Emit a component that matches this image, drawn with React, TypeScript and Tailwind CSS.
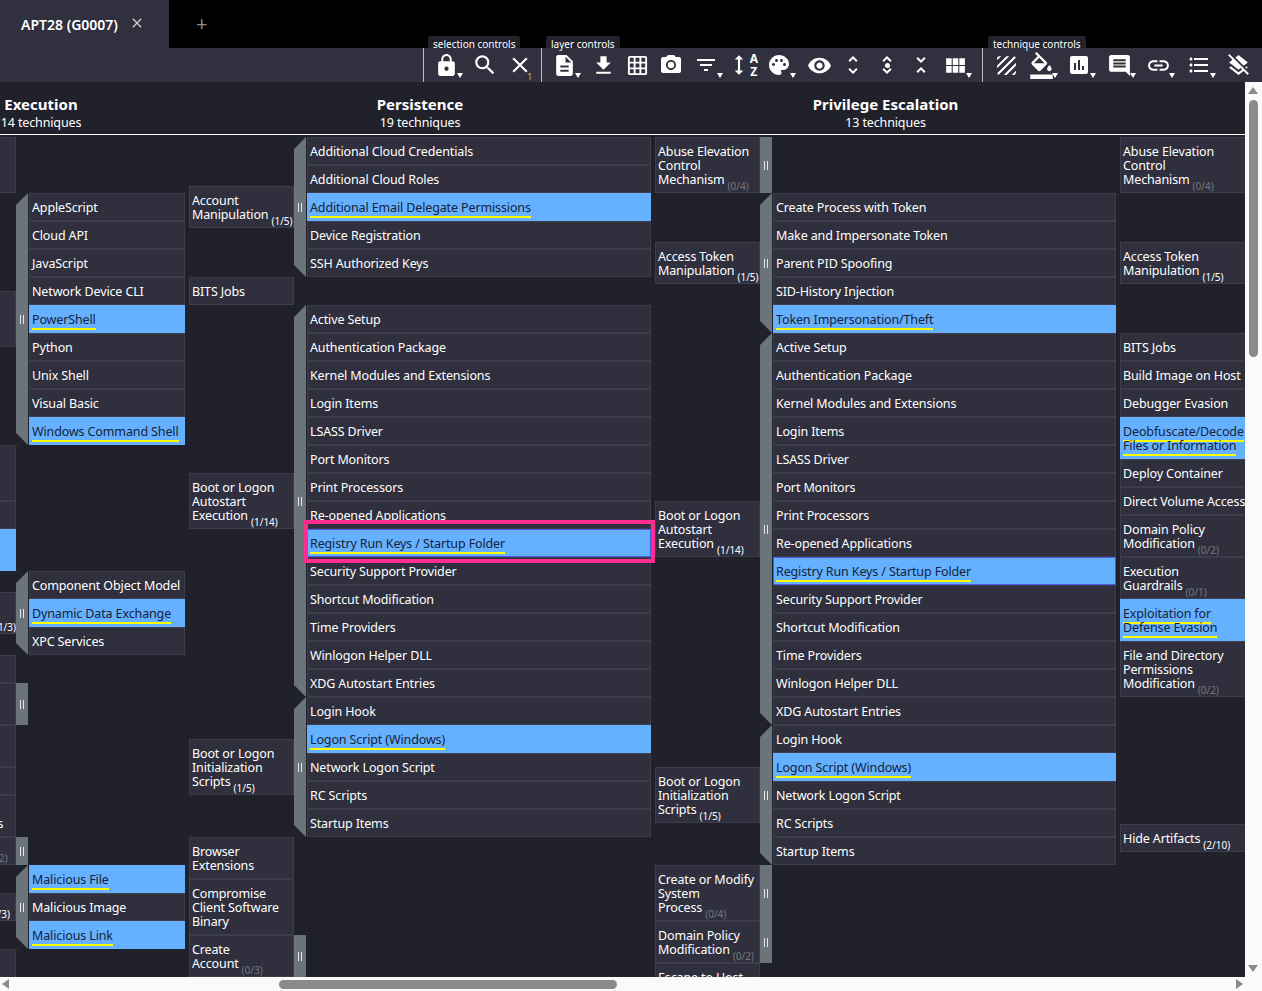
import type { ReactNode } from 'react';
import {
  MdLock, MdSearch, MdClear, MdDescription, MdFileDownload, MdGridOn, MdPhotoCamera, MdFilterList,
  MdHeight, MdPalette, MdVisibility, MdUnfoldMore, MdUnfoldLess, MdViewModule, MdTexture,
  MdFormatColorFill, MdInsertChart, MdComment, MdLink, MdFormatListBulleted, MdLayersClear,
} from 'react-icons/md';

const FONT = "font-['Noto_Sans','Open_Sans',sans-serif]";

// label, selected, outlined
type Sub = [string, boolean?, boolean?];

function Label({ text, selected }: { text: string; selected?: boolean }) {
  if (selected) return <span className="border-b-2 border-[#ffff00] text-[#14233a]">{text}</span>;
  return <span>{text}</span>;
}

function Count({ value }: { value?: string }) {
  if (!value) return null;
  const zero = value.startsWith('(0');
  return (
    <span className={`ml-[3px] whitespace-nowrap text-[10px] leading-[0] tracking-normal align-[-6px] ${zero ? 'text-[#77777f]' : 'text-white'}`}>{value}</span>
  );
}

function Cell({ text, count, selected, outlined, className = '' }: { text: string; count?: string; selected?: boolean; outlined?: boolean; className?: string }) {
  const tone = outlined
    ? 'border-[#4a55e6] bg-[#66b1ff]'
    : selected
      ? 'border-[#66b1ff] bg-[#66b1ff]'
      : 'border-[#3d3d4c] bg-[#2f2f3d] text-white';
  return (
    <div className={`border px-[2px] pb-[5px] pt-[7px] text-[12.5px] leading-[14px] tracking-[-0.13px] ${tone} ${className}`}>
      <Label text={text} selected={selected} />
      <Count value={count} />
    </div>
  );
}

function Grip({ chevron }: { chevron?: boolean }) {
  return (
    <div className={`flex w-[12px] shrink-0 items-center justify-center bg-[#6b737b] ${chevron ? '[clip-path:polygon(0_12px,100%_0,100%_100%,0_calc(100%-12px))]' : ''}`}>
      <div className="h-[9px] w-[4px] border-x border-[#e4e6e8]" />
    </div>
  );
}

// technique row: parent cell, optional sidebar, optional list of subtechniques
function Row({ text, count, selected, parentW, subW, subs, grip, cellClass }: {
  text: string; count?: string; selected?: boolean; parentW: string; subW?: string; subs?: Sub[]; grip?: boolean; cellClass?: string;
}) {
  return (
    <div className="flex">
      <div className={`flex shrink-0 flex-col justify-center ${parentW}`}>
        <Cell text={text} count={count} selected={selected} className={cellClass} />
      </div>
      {subs ? <Grip chevron /> : grip ? <Grip /> : null}
      {subs ? (
        <div className={`ml-px flex shrink-0 flex-col ${subW}`}>
          {subs.map(([s, sel, outlined]) => (
            <Cell key={s} text={s} selected={sel} outlined={outlined} className="h-[28px] whitespace-nowrap" />
          ))}
        </div>
      ) : null}
    </div>
  );
}

const bootSubs: Sub[] = [
  ['Active Setup'], ['Authentication Package'], ['Kernel Modules and Extensions'], ['Login Items'],
  ['LSASS Driver'], ['Port Monitors'], ['Print Processors'], ['Re-opened Applications'],
  ['Registry Run Keys / Startup Folder', true, true], ['Security Support Provider'], ['Shortcut Modification'],
  ['Time Providers'], ['Winlogon Helper DLL'], ['XDG Autostart Entries'],
];
const initSubs: Sub[] = [
  ['Login Hook'], ['Logon Script (Windows)', true], ['Network Logon Script'], ['RC Scripts'], ['Startup Items'],
];

function ExecutionColumn() {
  const p = 'w-[119px]';
  const s = 'w-[156px]';
  return (
    <div className="flex w-[288px] shrink-0 flex-col">
      <Row parentW={p} text="Cloud Administration Command" />
      <Row parentW={p} subW={s} text="Command and Scripting Interpreter" count="(3/9)" subs={[
        ['AppleScript'], ['Cloud API'], ['JavaScript'], ['Network Device CLI'], ['PowerShell', true],
        ['Python'], ['Unix Shell'], ['Visual Basic'], ['Windows Command Shell', true],
      ]} />
      <Row parentW={p} text="Container Administration Command" />
      <Row parentW={p} text="Deploy Container" />
      <Row parentW={p} text="Exploitation for Client Execution" selected />
      <Row parentW={p} subW={s} text="Inter-Process Communication" count="(1/3)" subs={[
        ['Component Object Model'], ['Dynamic Data Exchange', true], ['XPC Services'],
      ]} />
      <Row parentW={p} text="Native API" />
      <Row parentW={p} text="Scheduled Task/Job" count="(0/5)" grip />
      <Row parentW={p} text="Serverless Execution" />
      <Row parentW={p} text="Shared Modules" />
      <Row parentW={p} text="Software Deployment Tools" />
      <Row parentW={p} text="System Services" count="(0/2)" grip cellClass="-indent-[8px] whitespace-nowrap" />
      <Row parentW={p} subW={s} text="User Execution" count="(2/3)" subs={[
        ['Malicious File', true], ['Malicious Image'], ['Malicious Link', true],
      ]} />
      <Row parentW={p} text="Windows Management Instrumentation" />
    </div>
  );
}

function PersistenceColumn() {
  const p = 'w-[105px]';
  const s = 'w-[344px]';
  return (
    <div className="ml-[4px] flex w-[462px] shrink-0 flex-col">
      <Row parentW={p} subW={s} text="Account Manipulation" count="(1/5)" subs={[
        ['Additional Cloud Credentials'], ['Additional Cloud Roles'], ['Additional Email Delegate Permissions', true],
        ['Device Registration'], ['SSH Authorized Keys'],
      ]} />
      <Row parentW={p} text="BITS Jobs" />
      <Row parentW={p} subW={s} text="Boot or Logon Autostart Execution" count="(1/14)" subs={bootSubs} />
      <Row parentW={p} subW={s} text="Boot or Logon Initialization Scripts" count="(1/5)" subs={initSubs} />
      <Row parentW={p} text="Browser Extensions" />
      <Row parentW={p} text="Compromise Client Software Binary" />
      <Row parentW={p} text="Create Account" count="(0/3)" grip />
    </div>
  );
}

function PrivEscColumn() {
  const p = 'w-[105px]';
  const s = 'w-[343px]';
  return (
    <div className="ml-[4px] flex w-[461px] shrink-0 flex-col">
      <Row parentW={p} text="Abuse Elevation Control Mechanism" count="(0/4)" grip />
      <Row parentW={p} subW={s} text="Access Token Manipulation" count="(1/5)" subs={[
        ['Create Process with Token'], ['Make and Impersonate Token'], ['Parent PID Spoofing'],
        ['SID-History Injection'], ['Token Impersonation/Theft', true],
      ]} />
      <Row parentW={p} subW={s} text="Boot or Logon Autostart Execution" count="(1/14)" subs={bootSubs} />
      <Row parentW={p} subW={s} text="Boot or Logon Initialization Scripts" count="(1/5)" subs={initSubs} />
      <Row parentW={p} text="Create or Modify System Process" count="(0/4)" grip />
      <Row parentW={p} text="Domain Policy Modification" count="(0/2)" grip />
      <Row parentW={p} text="Escape to Host" />
    </div>
  );
}

function DefenseColumn() {
  return (
    <div className="ml-[4px] flex w-[132px] shrink-0 flex-col">
      <Cell text="Abuse Elevation Control Mechanism" count="(0/4)" />
      <div className="flex h-[140px] flex-col justify-center"><Cell text="Access Token Manipulation" count="(1/5)" /></div>
      <Cell text="BITS Jobs" className="whitespace-nowrap" />
      <Cell text="Build Image on Host" className="whitespace-nowrap" />
      <Cell text="Debugger Evasion" className="whitespace-nowrap" />
      <Cell text="Deobfuscate/Decode Files or Information" selected className="h-[42px]" />
      <Cell text="Deploy Container" className="whitespace-nowrap" />
      <Cell text="Direct Volume Access" className="whitespace-nowrap" />
      <Cell text="Domain Policy Modification" count="(0/2)" />
      <Cell text="Execution Guardrails" count="(0/1)" />
      <Cell text="Exploitation for Defense Evasion" selected />
      <Cell text="File and Directory Permissions Modification" count="(0/2)" />
      <div className="flex h-[282px] flex-col justify-center"><Cell text="Hide Artifacts" count="(2/10)" /></div>
    </div>
  );
}

function TacticHeader({ title, sub, className }: { title: string; sub: string; className: string }) {
  return (
    <div className={`shrink-0 text-center text-white ${className}`}>
      <div className="text-[15px] font-bold leading-[20px]">{title}</div>
      <div className="pt-px text-[12.5px] leading-[16px] tracking-[-0.13px]">{sub}</div>
    </div>
  );
}

function Dropdown() {
  return <span className="absolute bottom-[4px] right-[0px] h-0 w-0 border-x-[3px] border-t-[5px] border-x-transparent border-t-white" />;
}

function Tool({ children, ml, drop, badge }: { children: ReactNode; ml?: string; drop?: boolean; badge?: string }) {
  return (
    <div className={`relative flex h-[34px] w-[34px] shrink-0 items-center justify-center text-white ${ml ?? ''}`}>
      {children}
      {drop ? <Dropdown /> : null}
      {badge ? <span className="absolute bottom-[1px] right-[5px] text-[8px] leading-[8px] text-[#e0c070]">{badge}</span> : null}
    </div>
  );
}

function Divider({ ml }: { ml: string }) {
  return <div className={`h-[34px] w-px shrink-0 bg-[#b9b9c0] ${ml}`} />;
}

function SectionTab({ text, className }: { text: string; className: string }) {
  return (
    <span className={`absolute top-[-12px] z-10 h-[12px] whitespace-nowrap rounded-t-[3px] bg-[#23232d] px-[5px] text-[10px] leading-[16px] text-white ${className}`}>{text}</span>
  );
}

export default function App() {
  return (
    <div className={`flex h-[991px] w-[1262px] flex-col overflow-hidden bg-[#fafafa] ${FONT}`}>
      {/* tabs */}
      <div className="flex h-[48px] shrink-0 bg-black">
        <div className="flex w-[169px] items-center bg-[#30303e] pl-[21px] text-white">
          <span className="text-[14px] font-semibold">APT28 (G0007)</span>
          <MdClear className="ml-[11px] -mt-[3px] text-[#cfcfd4]" size={16} />
        </div>
        <div className="ml-[27px] flex items-center text-[20px] text-[#8a8a8f]">+</div>
      </div>

      {/* toolbar */}
      <div className="relative flex h-[34px] shrink-0 items-center justify-end bg-[#30303e] pr-[7px]">
        <SectionTab text="selection controls" className="left-[428px]" />
        <SectionTab text="layer controls" className="left-[546px]" />
        <SectionTab text="technique controls" className="left-[988px]" />
        <Divider ml="" />
        <Tool ml="ml-[5px]" drop><MdLock size={25} /></Tool>
        <Tool ml="ml-[5px]"><MdSearch size={26} /></Tool>
        <Tool ml="ml-[1px]" badge="1"><MdClear size={26} className="-ml-[1px]" /></Tool>
        <Divider ml="ml-[4px]" />
        <Tool ml="ml-[5px]" drop><MdDescription size={25} /></Tool>
        <Tool ml="ml-[5px]"><MdFileDownload size={25} /></Tool>
        <Tool><MdGridOn size={23} /></Tool>
        <Tool><MdPhotoCamera size={24} /></Tool>
        <Tool ml="ml-[1px]" drop><MdFilterList size={24} /></Tool>
        <Tool ml="ml-[5px]">
          <MdHeight size={26} className="-ml-[12px]" />
          <span className="absolute right-[4px] top-[4px] flex flex-col text-center text-[12px] font-bold leading-[13px]"><span>A</span><span>Z</span></span>
        </Tool>
        <Tool drop><MdPalette size={24} /></Tool>
        <Tool ml="ml-[6px]"><MdVisibility size={25} /></Tool>
        <Tool><MdUnfoldMore size={24} /></Tool>
        <Tool>
          <MdUnfoldMore size={24} />
          <span className="absolute h-[5px] w-[5px] rounded-full bg-white" />
        </Tool>
        <Tool><MdUnfoldLess size={24} /></Tool>
        <Tool drop><MdViewModule size={25} /></Tool>
        <Divider ml="ml-[10px]" />
        <Tool ml="ml-[6px]"><MdTexture size={25} /></Tool>
        <Tool ml="ml-[1px]" drop><MdFormatColorFill size={27} /></Tool>
        <Tool ml="ml-[4px]" drop><MdInsertChart size={24} /></Tool>
        <Tool ml="ml-[6px]" drop><MdComment size={25} /></Tool>
        <Tool ml="ml-[5px]" drop><MdLink size={25} /></Tool>
        <Tool ml="ml-[7px]" drop><MdFormatListBulleted size={24} /></Tool>
        <Tool ml="ml-[5px]"><MdLayersClear size={25} /></Tool>
      </div>

      {/* matrix + scrollbars */}
      <div className="relative flex min-h-0 flex-1 flex-col">
        <div className="flex min-h-0 flex-1">
          <div className="min-w-0 flex-1 overflow-hidden bg-[#21212b]">
            <div className="-ml-[103px] flex h-[53px] border-b border-white pt-[12px]">
              <TacticHeader title="Execution" sub="14 techniques" className="w-[288px]" />
              <TacticHeader title="Persistence" sub="19 techniques" className="ml-[4px] w-[462px]" />
              <TacticHeader title="Privilege Escalation" sub="13 techniques" className="ml-[4px] w-[461px]" />
            </div>
            <div className="-ml-[103px] flex pt-[2px]">
              <ExecutionColumn />
              <PersistenceColumn />
              <PrivEscColumn />
              <DefenseColumn />
            </div>
          </div>
          {/* vertical scrollbar */}
          <div className="flex w-[17px] shrink-0 flex-col items-center pr-[1px]">
            <span className="mt-[5px] h-0 w-0 border-x-[5px] border-b-[7px] border-x-transparent border-b-[#8a8a8a]" />
            <div className="mt-[6px] h-[257px] w-[9px] rounded-full bg-[#8a8a8a]" />
            <span className="mt-auto mb-[5px] h-0 w-0 border-x-[5px] border-t-[7px] border-x-transparent border-t-[#8a8a8a]" />
          </div>
        </div>
        {/* horizontal scrollbar */}
        <div className="flex h-[14px] shrink-0 items-center pl-[2px] pr-[19px]">
          <span className="h-0 w-0 border-y-[5px] border-r-[7px] border-y-transparent border-r-[#8a8a8a]" />
          <div className="ml-[270px] h-[9px] w-[338px] rounded-full bg-[#8a8a8a]" />
          <span className="ml-auto h-0 w-0 border-y-[5px] border-l-[7px] border-y-transparent border-l-[#8a8a8a]" />
        </div>
        {/* highlight box around the selected technique */}
        <div className="pointer-events-none absolute left-[304px] top-[438px] h-[43px] w-[351px] border-[4px] border-[#ff2d8f]" />
      </div>
    </div>
  );
}
